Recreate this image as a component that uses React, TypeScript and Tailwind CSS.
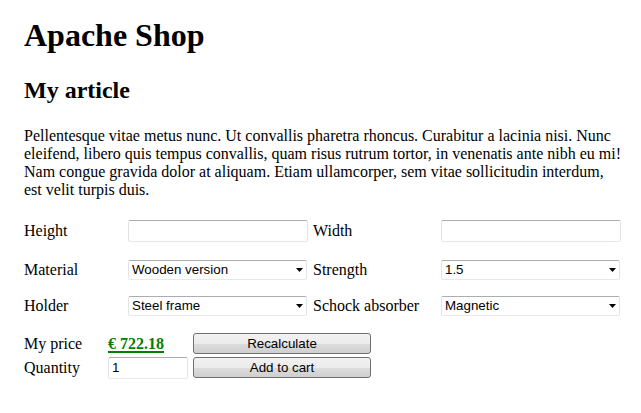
import React from 'react';

const serif = "font-['Liberation_Serif','Times_New_Roman',serif]";
const sans = "font-['Liberation_Sans',Arial,sans-serif]";

function TextBox({ value = '', width }: { value?: string; width: string }) {
  return (
    <input
      type="text"
      defaultValue={value}
      className={`${width} h-[22px] rounded-[2px] border border-[#e2e3ea] border-t-[#abadb3] border-b-[#e3e9ef] bg-white px-[3px] ${sans} text-[13.33px] text-black outline-none`}
    />
  );
}

function Dropdown({ value }: { value: string }) {
  return (
    <div
      className={`w-[179px] h-[20px] flex items-center justify-between rounded-[2px] border border-[#e2e3ea] border-t-[#abadb3] border-b-[#e3e9ef] bg-white pl-[3px] pr-[2px] ${sans} text-[13.33px] text-black`}
    >
      <span>{value}</span>
      <svg width="7" height="4" viewBox="0 0 7 4" className="mr-[1px]">
        <path d="M0 0h7L3.5 4z" fill="#000" />
      </svg>
    </div>
  );
}

function Button({ label }: { label: string }) {
  return (
    <button
      type="button"
      className={`w-[178px] h-[21px] rounded-[3px] border border-[#707070] bg-[linear-gradient(#f2f2f2_0%,#ebebeb_50%,#dddddd_50%,#cfcfcf_100%)] ${sans} text-[13.33px] leading-none text-black`}
    >
      {label}
    </button>
  );
}

function Label({ text, width }: { text: string; width: string }) {
  return <span className={`${width} shrink-0 text-[16px] leading-[18px]`}>{text}</span>;
}

export default function App() {
  return (
    <div className={`w-[641px] h-[413px] bg-white text-black ${serif} pl-[24px]`}>
      <div className="w-[598px]">
        <h1 className="pt-[17px] text-[32px] leading-[37px] font-bold">Apache Shop</h1>
        <h2 className="mt-[22px] text-[24px] leading-[28px] font-bold">My article</h2>
        <p className="mt-[23px] text-[16px] leading-[18px]">
          Pellentesque vitae metus nunc. Ut convallis pharetra rhoncus. Curabitur a lacinia nisi. Nunc
          eleifend, libero quis tempus convallis, quam risus rutrum tortor, in venenatis ante nibh eu mi!
          Nam congue gravida dolor at aliquam. Etiam ullamcorper, sem vitae sollicitudin interdum, est
          velit turpis duis.
        </p>

        <div className="mt-[21px] flex flex-col">
          <div className="flex items-center h-[22px]">
            <Label text="Height" width="w-[104px]" />
            <TextBox width="w-[180px]" />
            <span className="w-[5px]" />
            <Label text="Width" width="w-[128px]" />
            <TextBox width="w-[180px]" />
          </div>
          <div className="mt-[18px] flex items-center h-[20px]">
            <Label text="Material" width="w-[104px]" />
            <Dropdown value="Wooden version" />
            <span className="w-[6px]" />
            <Label text="Strength" width="w-[128px]" />
            <Dropdown value="1.5" />
          </div>
          <div className="mt-[16px] flex items-center h-[20px]">
            <Label text="Holder" width="w-[104px]" />
            <Dropdown value="Steel frame" />
            <span className="w-[6px]" />
            <Label text="Schock absorber" width="w-[128px]" />
            <Dropdown value="Magnetic" />
          </div>

          <div className="mt-[17px] flex items-center h-[21px]">
            <Label text="My price" width="w-[84px]" />
            <span className="w-[85px] shrink-0 text-[16px] leading-[18px] font-bold text-[#008000] underline decoration-2 underline-offset-[2px]">
              € 722.18
            </span>
            <Button label="Recalculate" />
          </div>
          <div className="mt-[3px] flex items-center h-[21px]">
            <Label text="Quantity" width="w-[84px]" />
            <TextBox value="1" width="w-[80px]" />
            <span className="w-[5px]" />
            <Button label="Add to cart" />
          </div>
        </div>
      </div>
    </div>
  );
}
